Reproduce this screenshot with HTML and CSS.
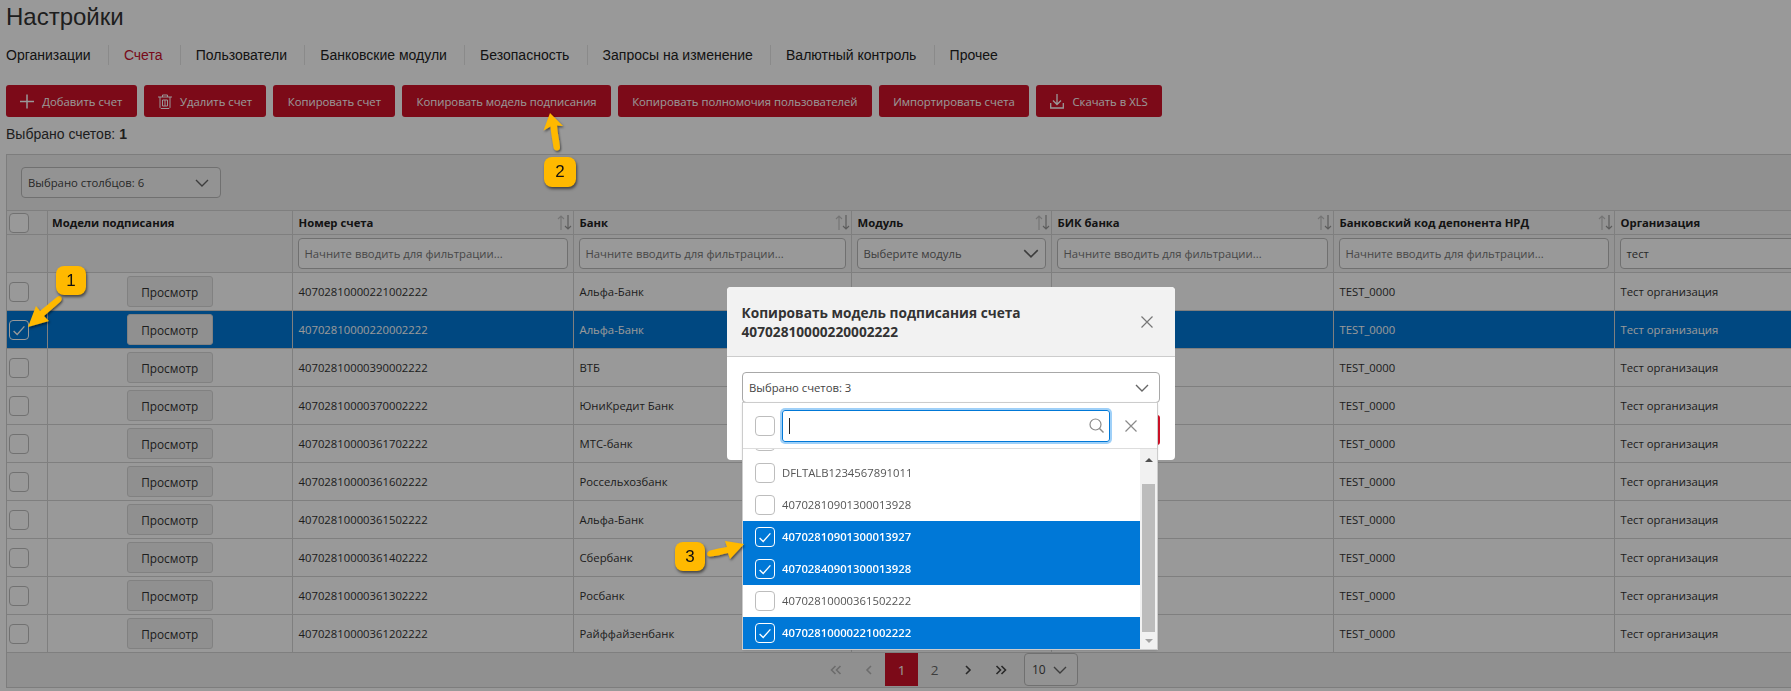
FILE: index.html
```html
<!DOCTYPE html>
<html lang="ru">
<head>
<meta charset="utf-8">
<title>Настройки</title>
<link rel="stylesheet" href="styles.css">
</head>
<body>
<svg class="sprite" aria-hidden="true">
  <symbol id="chev" viewBox="0 0 14 8"><path d="M1 1l6 6 6-6" fill="none" stroke="currentColor" stroke-width="1.400"/></symbol>
  <symbol id="tick" viewBox="0 0 20 20"><path d="M4 11l4 4 8-9" fill="none" stroke="currentColor" stroke-width="1.500"/></symbol>
  <symbol id="sort" viewBox="0 0 15 15"><path d="M4 15V1M1 4l3-3 3 3" fill="none" stroke="#c4c4c4" stroke-width="1.200"/><path d="M11 0v14M8 11l3 3 3-3" fill="none" stroke="#9a9a9a" stroke-width="1.200"/></symbol>
  <symbol id="cross" viewBox="0 0 12 12"><path d="M.5.5l11 11M11.500.5l-11 11" fill="none" stroke="currentColor" stroke-width="1.200"/></symbol>
  <symbol id="first" viewBox="0 0 12 10"><path d="M5.500 1l-4 4 4 4M10.500 1l-4 4 4 4" fill="none" stroke="currentColor" stroke-width="1.600"/></symbol>
  <symbol id="prev" viewBox="0 0 12 10"><path d="M8 1L4 5l4 4" fill="none" stroke="currentColor" stroke-width="1.600"/></symbol>
  <symbol id="next" viewBox="0 0 12 10"><path d="M4 1l4 4-4 4" fill="none" stroke="currentColor" stroke-width="1.600"/></symbol>
  <symbol id="last" viewBox="0 0 12 10"><path d="M1.500 1l4 4-4 4M6.500 1l4 4-4 4" fill="none" stroke="currentColor" stroke-width="1.600"/></symbol>
</svg>

<div class="page">
  <h1 class="title">Настройки</h1>
  <nav class="tabs">
    <a class="tab">Организации</a>
    <a class="tab tab-active">Счета</a>
    <a class="tab">Пользователи</a>
    <a class="tab">Банковские модули</a>
    <a class="tab">Безопасность</a>
    <a class="tab">Запросы на изменение</a>
    <a class="tab">Валютный контроль</a>
    <a class="tab tab-last">Прочее</a>
  </nav>
  <div class="toolbar">
    <button class="btn"><svg class="btn-icon" viewBox="0 0 14 14"><path d="M7 0v14M0 7h14" fill="none" stroke="currentColor" stroke-width="1.500"/></svg>Добавить счет</button>
    <button class="btn"><svg class="btn-icon" viewBox="0 0 14 15"><path d="M0 3h14M4.500 3V1h5v2M2 3v10.500l1 1h8l1-1V3M4.500 6h5v6h-5zM7 6v6" fill="none" stroke="currentColor" stroke-width="1"/></svg>Удалить счет</button>
    <button class="btn">Копировать счет</button>
    <button class="btn">Копировать модель подписания</button>
    <button class="btn">Копировать полномочия пользователей</button>
    <button class="btn">Импортировать счета</button>
    <button class="btn"><svg class="btn-icon" viewBox="0 0 14 15"><path d="M7 0v10M3 6.500L7 10.500l4-4M.7 9v5h12.600V9" fill="none" stroke="currentColor" stroke-width="1.300"/></svg>Скачать в XLS</button>
  </div>
  <p class="selected-count">Выбрано счетов: <b>1</b></p>

  <section class="panel">
    <div class="panel-head">
      <div class="select select-columns">Выбрано столбцов: 6<svg class="chev"><use href="#chev"/></svg></div>
    </div>
    <table class="grid">
      <colgroup>
        <col class="c0"><col class="c1"><col class="c2"><col class="c3"><col class="c4"><col class="c5"><col class="c6"><col class="c7">
      </colgroup>
      <thead>
        <tr class="row-head">
          <th class="cell-check"><span class="cb"></span></th>
          <th class="th-models">Модели подписания</th>
          <th><div class="th-in">Номер счета<svg class="sort"><use href="#sort"/></svg></div></th>
          <th><div class="th-in">Банк<svg class="sort"><use href="#sort"/></svg></div></th>
          <th><div class="th-in">Модуль<svg class="sort"><use href="#sort"/></svg></div></th>
          <th><div class="th-in">БИК банка<svg class="sort"><use href="#sort"/></svg></div></th>
          <th><div class="th-in">Банковский код депонента НРД<svg class="sort"><use href="#sort"/></svg></div></th>
          <th>Организация</th>
        </tr>
        <tr class="row-filter">
          <td></td>
          <td></td>
          <td><div class="field ph">Начните вводить для фильтрации...</div></td>
          <td><div class="field ph">Начните вводить для фильтрации...</div></td>
          <td><div class="field ph field-select">Выберите модуль<svg class="chev chev-field"><use href="#chev"/></svg></div></td>
          <td><div class="field ph">Начните вводить для фильтрации...</div></td>
          <td><div class="field ph">Начните вводить для фильтрации...</div></td>
          <td><div class="field">тест</div></td>
        </tr>
      </thead>
      <tbody>
        <tr><td><span class="cb"></span></td><td class="cell-view"><button class="view">Просмотр</button></td><td>40702810000221002222</td><td>Альфа-Банк</td><td></td><td></td><td>TEST_0000</td><td>Тест организация</td></tr>
        <tr class="row-on"><td><span class="cb"><svg class="tick"><use href="#tick"/></svg></span></td><td class="cell-view"><button class="view">Просмотр</button></td><td>40702810000220002222</td><td>Альфа-Банк</td><td></td><td></td><td>TEST_0000</td><td>Тест организация</td></tr>
        <tr><td><span class="cb"></span></td><td class="cell-view"><button class="view">Просмотр</button></td><td>40702810000390002222</td><td>ВТБ</td><td></td><td></td><td>TEST_0000</td><td>Тест организация</td></tr>
        <tr><td><span class="cb"></span></td><td class="cell-view"><button class="view">Просмотр</button></td><td>40702810000370002222</td><td>ЮниКредит Банк</td><td></td><td></td><td>TEST_0000</td><td>Тест организация</td></tr>
        <tr><td><span class="cb"></span></td><td class="cell-view"><button class="view">Просмотр</button></td><td>40702810000361702222</td><td>МТС-банк</td><td></td><td></td><td>TEST_0000</td><td>Тест организация</td></tr>
        <tr><td><span class="cb"></span></td><td class="cell-view"><button class="view">Просмотр</button></td><td>40702810000361602222</td><td>Россельхозбанк</td><td></td><td></td><td>TEST_0000</td><td>Тест организация</td></tr>
        <tr><td><span class="cb"></span></td><td class="cell-view"><button class="view">Просмотр</button></td><td>40702810000361502222</td><td>Альфа-Банк</td><td></td><td></td><td>TEST_0000</td><td>Тест организация</td></tr>
        <tr><td><span class="cb"></span></td><td class="cell-view"><button class="view">Просмотр</button></td><td>40702810000361402222</td><td>Сбербанк</td><td></td><td></td><td>TEST_0000</td><td>Тест организация</td></tr>
        <tr><td><span class="cb"></span></td><td class="cell-view"><button class="view">Просмотр</button></td><td>40702810000361302222</td><td>Росбанк</td><td></td><td></td><td>TEST_0000</td><td>Тест организация</td></tr>
        <tr><td><span class="cb"></span></td><td class="cell-view"><button class="view">Просмотр</button></td><td>40702810000361202222</td><td>Райффайзенбанк</td><td></td><td></td><td>TEST_0000</td><td>Тест организация</td></tr>
      </tbody>
    </table>
    <div class="pager">
      <span class="pg pg-muted"><svg class="pg-icon"><use href="#first"/></svg></span>
      <span class="pg pg-muted"><svg class="pg-icon"><use href="#prev"/></svg></span>
      <span class="pg pg-on">1</span>
      <span class="pg">2</span>
      <span class="pg pg-dark"><svg class="pg-icon"><use href="#next"/></svg></span>
      <span class="pg pg-dark"><svg class="pg-icon"><use href="#last"/></svg></span>
      <div class="select select-size">10<svg class="chev"><use href="#chev"/></svg></div>
    </div>
  </section>
</div>

<div class="backdrop"></div>

<div class="modal">
  <header class="modal-head">
    <h2 class="modal-title">Копировать модель подписания счета 40702810000220002222</h2>
    <svg class="modal-close"><use href="#cross"/></svg>
  </header>
  <div class="modal-body">
    <div class="select select-accounts">Выбрано счетов: 3<svg class="chev"><use href="#chev"/></svg></div>
    <div class="modal-actions"><span class="btn-save"></span></div>
    <div class="drop">
      <div class="drop-head">
        <span class="cb"></span>
        <div class="search"><span class="caret"></span>
          <svg class="search-icon" viewBox="0 0 15 15"><circle cx="6.500" cy="6.500" r="5.500" fill="none" stroke="#8a8a8a" stroke-width="1.200"/><path d="M10.500 10.500l4 4" stroke="#8a8a8a" stroke-width="1.400"/></svg>
        </div>
        <svg class="drop-clear"><use href="#cross"/></svg>
      </div>
      <div class="drop-list">
        <div class="opt"><span class="cb"></span></div>
        <div class="opt"><span class="cb"></span>DFLTALB1234567891011</div>
        <div class="opt"><span class="cb"></span>40702810901300013928</div>
        <div class="opt opt-on"><span class="cb"><svg class="tick"><use href="#tick"/></svg></span>40702810901300013927</div>
        <div class="opt opt-on"><span class="cb"><svg class="tick"><use href="#tick"/></svg></span>40702840901300013928</div>
        <div class="opt"><span class="cb"></span>40702810000361502222</div>
        <div class="opt opt-on"><span class="cb"><svg class="tick"><use href="#tick"/></svg></span>40702810000221002222</div>
      </div>
      <div class="scroll">
        <span class="scroll-up"></span>
        <span class="scroll-thumb"></span>
        <span class="scroll-down"></span>
      </div>
    </div>
  </div>
</div>

<svg class="arrows" viewBox="0 0 1791 691" aria-hidden="true">
  <defs>
    <filter id="shade" x="-30%" y="-30%" width="160%" height="160%"><feDropShadow dx="1" dy="1.500" stdDeviation="1.200" flood-color="#000" flood-opacity=".55"/></filter>
  </defs>
  <path filter="url(#shade)" fill="#ffb900" d="M28 327l8-21 4 5 17-14c2-1.500 4-1 4.500.5s0 3-1.500 4.500l-16 14 5 5z"/>
  <path filter="url(#shade)" fill="#ffb900" d="M550 113l13 13-6-.5c.5 8 2.500 15 3 22 0 2-1.500 3-3 3-2 0-3-1-3.500-3-1-7-2.500-14-3-21l-7 4z"/>
  <path filter="url(#shade)" fill="#ffb900" d="M744 544l-14 15-2-6c-6 1.500-12 3-18 3.500-2 0-3-1-3-2.500s1-2.500 3-3.500c6-1.500 11-2.500 17-3.500l-2-6z"/>
</svg>
<span class="badge badge-1">1</span>
<span class="badge badge-2">2</span>
<span class="badge badge-3">3</span>
</body>
</html>
```

FILE: styles.css
```css
html, body {
  margin: 0;
  height: 691px;
  overflow: hidden;
  background: #fff;
}
body {
  font-family: "Open Sans", "Noto Sans", sans-serif;
  font-size: 11.3px;
  color: #333;
}
.sprite { display: none; }

.page { width: 2100px; }

.title {
  margin: 0;
  padding-left: 6px;
  font: 400 24px/34px "Liberation Sans", Arial, sans-serif;
  color: #333;
}

.tabs {
  display: flex;
  margin-top: 11px;
  padding-left: 6px;
  font: 14px/20px "Liberation Sans", Arial, sans-serif;
  color: #222;
}
.tab { padding: 0 17.200px 0 15px; border-right: 1px solid #e6e6e6; }
.tab:first-child { padding-left: 0; }
.tab-active { color: #c8102e; }
.tab-last { border-right: 0; }

.toolbar {
  display: flex;
  gap: 7px;
  margin-top: 20px;
  padding-left: 6px;
}
.btn {
  display: flex;
  align-items: center;
  gap: 8px;
  height: 32px;
  padding: 0 14.300px;
  border: 0;
  border-radius: 3px;
  background: #cf1128;
  color: #fff;
  font: inherit;
  white-space: nowrap;
}
.btn-icon { width: 14px; height: 15px; flex: none; }

.selected-count {
  margin: 7px 0 0;
  padding-left: 6px;
  font: 14px/20px "Liberation Sans", Arial, sans-serif;
  color: #333;
}

.panel {
  box-sizing: border-box;
  height: 534px;
  margin: 10px 0 0 6px;
  border: 1px solid #d0d0d0;
  background: #f1f1f1;
}
.panel-head { padding: 12px 14px; }

.select {
  box-sizing: border-box;
  display: flex;
  align-items: center;
  justify-content: space-between;
  border: 1px solid #bbb;
  border-radius: 4px;
  background: #f5f5f5;
  color: #444;
}
.chev { width: 14px; height: 8px; flex: none; color: #666; }
.chev-field { width: 16px; height: 9px; }
.select-columns { width: 200px; height: 31px; padding: 0 11px 0 6px; }

.grid {
  table-layout: fixed;
  border-collapse: collapse;
  width: 2000px;
  background: #fff;
}
.c0 { width: 40.500px; }
.c1 { width: 244.500px; }
.c2 { width: 281px; }
.c3 { width: 278px; }
.c4 { width: 200px; }
.c5 { width: 282px; }
.c6 { width: 281px; }
.c7 { width: 393px; }

.grid th, .grid td {
  box-sizing: border-box;
  padding: 0 6px;
  border: 1px solid #d4d4d4;
  text-align: left;
}
.grid tr > :first-child { border-left: 0; padding: 0 0 0 2px; }
.grid th {
  font-weight: 700;
  font-size: 11.300px;
  color: #222;
  background: #f6f6f6;
}
.grid .th-models { padding-left: 4px; }
.row-head { height: 24px; }
.row-filter { height: 38px; background: #f6f6f6; }
.grid tbody tr { height: 38px; }
.grid .row-filter td { padding: 0 5px; }
.grid .row-filter td:last-child { padding-right: 0; }

.th-in { display: flex; align-items: center; justify-content: space-between; }
.sort { width: 15px; height: 15px; flex: none; margin-right: -5px; }

.field {
  box-sizing: border-box;
  display: flex;
  align-items: center;
  justify-content: space-between;
  height: 31px;
  padding: 0 6px;
  border: 1px solid #bbb;
  border-radius: 4px;
  background: #fff;
  color: #444;
  white-space: nowrap;
  overflow: hidden;
}
.ph { color: #777; }
.field-select { padding-right: 6px; color: #666; }

.cb {
  box-sizing: border-box;
  display: block;
  flex: none;
  width: 20px;
  height: 20px;
  border: 1px solid #bdbdbd;
  border-radius: 4px;
  background: #fff;
}
.tick { display: block; width: 18px; height: 18px; color: #fff; }

.cell-view { text-align: center !important; }
.view {
  width: 86px;
  height: 31px;
  border: 1px solid #d8d8d8;
  border-radius: 3px;
  background: #f0f0f0;
  color: #333;
  font: inherit;
  font-size: 11.800px;
  vertical-align: middle;
}
.row-on td { background: #0078d7; color: #fff; font-weight: 500; }
.row-on .view { font-weight: 400; }
.row-on .cb { background: transparent; border-color: #fff; }

.pager {
  display: flex;
  align-items: center;
  height: 33px;
  padding-left: 812px;
}
.pg {
  display: flex;
  align-items: center;
  justify-content: center;
  width: 33px;
  height: 33px;
  font-size: 13.500px;
  color: #666;
}
.pg-icon { width: 12px; height: 10px; }
.pg-muted { color: #b4b4b4; }
.pg-dark { color: #444; }
.pg-on { background: #cf1128; color: #fff; }
.select-size {
  width: 54px;
  height: 33px;
  margin-left: 7px;
  padding: 0 10px 0 7px;
  font-size: 12px;
}

.backdrop {
  position: fixed;
  inset: 0;
  background: rgba(0, 0, 0, .4);
}

.modal {
  position: fixed;
  left: 727px;
  top: 287px;
  width: 448px;
  height: 173px;
  border-radius: 4px;
  background: #fff;
}
.modal-head {
  box-sizing: border-box;
  display: flex;
  align-items: center;
  justify-content: space-between;
  height: 70px;
  padding: 0 22px 0 14.500px;
  border-bottom: 1px solid #ccc;
  border-radius: 4px 4px 0 0;
  background: #f2f2f2;
}
.modal-title {
  width: 300px;
  margin: 0;
  font-size: 13.700px;
  font-weight: 700;
  line-height: 19px;
  color: #333;
}
.modal-close { width: 12px; height: 12px; color: #777; }

.modal-body { position: relative; padding: 15px 15px 0; }
.select-accounts {
  height: 31px;
  padding: 0 10px 0 6px;
  border-color: #a8a8a8;
  background: #fff;
}
.modal-actions { display: flex; justify-content: flex-end; margin-top: 12px; }
.btn-save {
  width: 120px;
  height: 30px;
  border-radius: 3px;
  background: #cf1128;
}

.drop {
  position: absolute;
  left: 16px;
  top: 46px;
  width: 414px;
  height: 246px;
  background: #fff;
  box-shadow: 0 0 0 1px #ccc, 0 1px 3px rgba(0, 0, 0, .2);
}
.drop-head {
  box-sizing: border-box;
  display: flex;
  align-items: center;
  height: 46px;
  padding: 1px 0 0 12px;
  border-bottom: 1px solid #ddd;
}
.search {
  box-sizing: border-box;
  position: relative;
  width: 328px;
  height: 32px;
  margin-left: 7px;
  border: 1px solid #0078d7;
  border-radius: 3px;
  box-shadow: 0 0 0 2px #9fd0f8;
}
.caret {
  position: absolute;
  left: 6px;
  top: 7px;
  width: 1px;
  height: 16px;
  background: #222;
}
.search-icon { position: absolute; right: 5px; top: 7px; width: 15px; height: 15px; }
.drop-clear { width: 12px; height: 12px; margin-left: 15px; color: #8a8a8a; }

.drop-list {
  display: flex;
  flex-direction: column;
  justify-content: flex-end;
  height: 200px;
  width: 397px;
  overflow: hidden;
  color: #555;
}
.opt {
  box-sizing: border-box;
  flex: none;
  display: flex;
  align-items: center;
  gap: 7px;
  height: 32px;
  padding: 0 0 2px 12px;
}
.opt .cb { margin-top: 2px; }
.opt-on { background: #0078d7; color: #fff; font-weight: 600; }
.opt-on .cb { background: transparent; border-color: #fff; }

.scroll {
  position: absolute;
  right: 0;
  top: 46px;
  bottom: 0;
  width: 17px;
  background: #f1f1f1;
}
.scroll-thumb {
  position: absolute;
  left: 2px;
  top: 35px;
  width: 13px;
  height: 148px;
  background: #bcbcbc;
}
.scroll-up, .scroll-down {
  position: absolute;
  left: 5px;
  width: 0;
  height: 0;
  border-left: 4px solid transparent;
  border-right: 4px solid transparent;
}
.scroll-up { top: 9px; border-bottom: 4px solid #505050; }
.scroll-down { bottom: 6px; border-top: 4px solid #a3a3a3; }

.arrows {
  position: fixed;
  left: 0;
  top: 0;
  width: 1791px;
  height: 691px;
  pointer-events: none;
}
.badge {
  position: fixed;
  width: 30px;
  height: 29px;
  border-radius: 8px;
  background: #ffb900;
  box-shadow: 1px 2px 3px rgba(0, 0, 0, .55);
  font: 17px/29px "Liberation Sans", Arial, sans-serif;
  text-align: center;
  color: #111;
}
.badge-1 { left: 56px; top: 266px; }
.badge-2 { left: 544px; top: 157px; width: 32px; height: 30px; line-height: 30px; }
.badge-3 { left: 675px; top: 542px; }
```
